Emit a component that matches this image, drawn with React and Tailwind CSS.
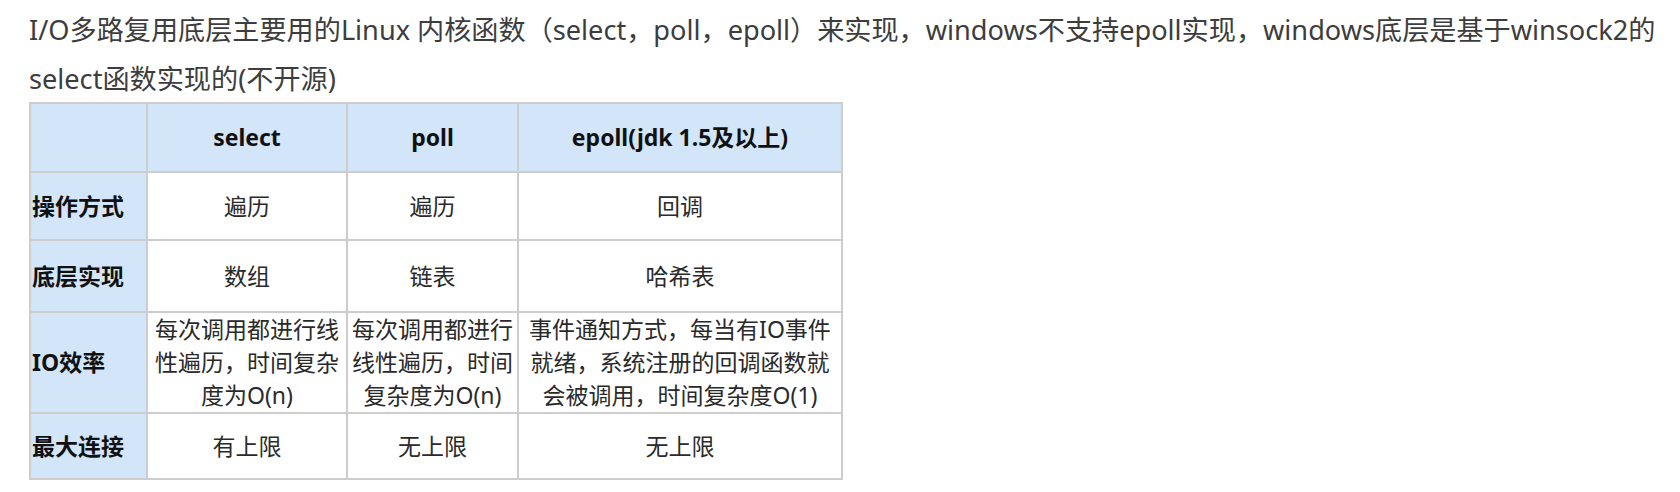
export default function App() {
  const font = { fontFamily: '"Noto Sans", "Noto Sans CJK SC", sans-serif' };
  const cell = "border-2 border-[#cdcdcd] text-center align-middle text-[#2a2a2a]";
  const label = "border-2 border-[#cdcdcd] bg-[#d2e5f9] text-left align-middle font-bold text-[#111] pl-[1px]";
  return (
    <div className="w-[1680px] h-[492px] bg-white overflow-hidden" style={font}>
      <div className="pt-[5px] pl-[29px] text-[27.15px] leading-[49px] text-[#3d3d3d] whitespace-nowrap">
        <div>I/O多路复用底层主要用的Linux 内核函数（select，poll，epoll）来实现，windows不支持epoll实现，windows底层是基于winsock2的</div>
        <div>select函数实现的(不开源)</div>
      </div>
      <table className="ml-[29px] mt-[-1px] table-fixed border-collapse w-[812px] text-[23px] leading-[33px]">
        <colgroup>
          <col className="w-[117px]" />
          <col className="w-[200px]" />
          <col className="w-[171px]" />
          <col className="w-[324px]" />
        </colgroup>
        <tbody>
          <tr className="h-[69px] bg-[#d2e5f9]">
            <td className="border-2 border-[#cdcdcd]"></td>
            <td className="border-2 border-[#cdcdcd] text-center font-bold text-[#111]">select</td>
            <td className="border-2 border-[#cdcdcd] text-center font-bold text-[#111]">poll</td>
            <td className="border-2 border-[#cdcdcd] text-center font-bold text-[#111]">epoll(jdk 1.5及以上)</td>
          </tr>
          <tr className="h-[68px]">
            <td className={label}>操作方式</td>
            <td className={cell}>遍历</td>
            <td className={cell}>遍历</td>
            <td className={cell}>回调</td>
          </tr>
          <tr className="h-[72px]">
            <td className={label}>底层实现</td>
            <td className={cell}>数组</td>
            <td className={cell}>链表</td>
            <td className={cell}>哈希表</td>
          </tr>
          <tr className="h-[100px]">
            <td className={label}>IO效率</td>
            <td className={cell}>每次调用都进行线<br />性遍历，时间复杂<br />度为O(n)</td>
            <td className={cell}>每次调用都进行<br />线性遍历，时间<br />复杂度为O(n)</td>
            <td className={cell}>事件通知方式，每当有IO事件<br />就绪，系统注册的回调函数就<br />会被调用，时间复杂度O(1)</td>
          </tr>
          <tr className="h-[66px]">
            <td className={label}>最大连接</td>
            <td className={cell}>有上限</td>
            <td className={cell}>无上限</td>
            <td className={cell}>无上限</td>
          </tr>
        </tbody>
      </table>
    </div>
  );
}
